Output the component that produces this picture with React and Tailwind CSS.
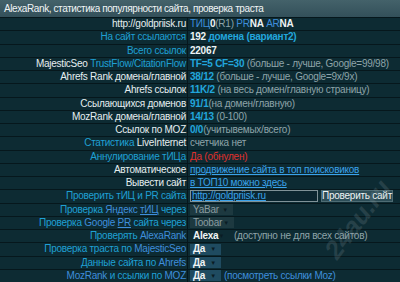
import React from "react";

const font = { fontFamily: '"Liberation Sans", Arial, sans-serif' };

function Row({ label, children }) {
    return (
        <div className="grid grid-cols-[187px_1fr] gap-x-px mb-px">
            <div className="bg-[#0d2b33] h-[12.25px] flex items-center justify-end pr-[1px] whitespace-nowrap overflow-hidden">
                {label}
            </div>
            <div className="bg-[#0d2b33] h-[12.25px] flex items-center pl-[2px] whitespace-nowrap overflow-hidden">
                {children}
            </div>
        </div>
    );
}

const W = ({ children }) => <span className="text-[#e6eef0]">{children}</span>;
const C = ({ children }) => <span className="text-[#1fa0d4]">{children}</span>;
const B = ({ children }) => <span className="text-[#3f8edb]">{children}</span>;
const G = ({ children }) => <span className="text-[#8ea4a9]">{children}</span>;
const N = ({ children }) => <span className="text-[#eef4f5] font-bold">{children}</span>;
const CB = ({ children }) => <span className="text-[#22a6dc] font-bold">{children}</span>;
const L = ({ children }) => <span className="text-[#3aa2ea] underline">{children}</span>;

function Sel({ text, w, bg, color, bold }) {
    return (
        <div
            className={`h-[11px] flex items-center justify-between pl-[3px] pr-[5px] ${w} ${bg} ${color} ${bold ? "font-bold" : ""}`}
        >
            <span>{text}</span>
            <span className="text-[6px] text-[#0a1c24]">▼</span>
        </div>
    );
}

export default function App() {
    return (
        <div
            className="relative w-[400px] h-[282px] bg-[#06171c] overflow-hidden text-[10px] leading-[12px] tracking-[-0.25px]"
            style={font}
        >
            <div className="h-[17px] bg-gradient-to-b from-[#44626a] to-[#33505a] text-[#f0f4f5] text-[10px] tracking-[-0.4px] flex items-center pl-[4px] mb-px">
                AlexaRank, статистика популярности сайта, проверка траста
            </div>

            <Row label={<W>http://goldpriisk.ru</W>}>
                <B>ТИЦ</B><N>0</N><G>(R1)</G>&nbsp;<B>PR</B><N>NA</N>&nbsp;<B>AR</B><N>NA</N>
            </Row>
            <Row label={<C>На сайт ссылаются</C>}>
                <N>192</N>&nbsp;<CB>домена (вариант2)</CB>
            </Row>
            <Row label={<C>Всего ссылок</C>}>
                <N>22067</N>
            </Row>
            <Row label={<><W>MajesticSeo</W>&nbsp;<C>TrustFlow/CitationFlow</C></>}>
                <CB>TF=5 CF=30</CB>&nbsp;<G>(больше - лучше, Google=99/98)</G>
            </Row>
            <Row label={<W>Ahrefs Rank домена/главной</W>}>
                <CB>38/12</CB>&nbsp;<G>(больше - лучше, Google=9x/9x)</G>
            </Row>
            <Row label={<W>Ahrefs ссылок</W>}>
                <CB>11K/2</CB>&nbsp;<G>(на весь домен/главную страницу)</G>
            </Row>
            <Row label={<W>Ссылающихся доменов</W>}>
                <CB>91/1</CB><G>(на домен/главную)</G>
            </Row>
            <Row label={<W>MozRank домена/главной</W>}>
                <CB>14/13</CB>&nbsp;<G>(0-100)</G>
            </Row>
            <Row label={<W>Ссылок по MOZ</W>}>
                <CB>0/0</CB><G>(учитывемых/всего)</G>
            </Row>
            <Row label={<><C>Статистика</C>&nbsp;<W>LiveInternet</W></>}>
                <G>счетчика нет</G>
            </Row>
            <Row label={<C>Аннулирование тИЦа</C>}>
                <span className="text-[#e0302c]">Да (обнулен)</span>
            </Row>
            <Row label={<W>Автоматическое</W>}>
                <L>продвижение сайта в топ поисковиков</L>
            </Row>
            <Row label={<W>Вывести сайт</W>}>
                <L>в ТОП10 можно здесь</L>
            </Row>
            <Row label={<C>Проверить тИЦ и PR сайта</C>}>
                <div className="w-[128px] h-[12px] border border-[#7f9298] bg-[#0b2630] flex items-center pl-[1px]">
                    <span className="text-[#3aa2ea] underline">http://goldpriisk.ru</span>
                </div>
                <div className="ml-[3px] w-[72px] h-[12px] bg-[#2d4e58] border border-[#4e6c74] text-[#eef4f5] flex items-center justify-center">
                    Проверить сайт
                </div>
            </Row>
            <Row label={<><C>Проверка</C>&nbsp;<B>Яндекс</B>&nbsp;<B><span className="underline">тИЦ</span></B>&nbsp;<C>через</C></>}>
                <Sel text="YaBar" w="w-[43px]" bg="bg-[#1d3940]" color="text-[#8a9ca0]" />
            </Row>
            <Row label={<><C>Проверка</C>&nbsp;<B>Google</B>&nbsp;<B><span className="underline">PR</span></B>&nbsp;<C>сайта через</C></>}>
                <Sel text="Toobar" w="w-[44px]" bg="bg-[#1d3940]" color="text-[#8a9ca0]" />
            </Row>
            <Row label={<><C>Проверять</C>&nbsp;<B>AlexaRank</B></>}>
                <Sel text="Alexa" w="w-[36px]" bg="bg-[#0d2b33]" color="text-[#f0f4f5]" bold />
                <span className="ml-[8px]"><G>(доступно не для всех сайтов)</G></span>
            </Row>
            <Row label={<><C>Проверка траста по</C>&nbsp;<B>MajesticSeo</B></>}>
                <Sel text="Да" w="w-[31px]" bg="bg-[#1f4b60]" color="text-[#f0f4f5]" bold />
            </Row>
            <Row label={<><C>Данные сайта по</C>&nbsp;<B>Ahrefs</B></>}>
                <Sel text="Да" w="w-[31px]" bg="bg-[#1f4b60]" color="text-[#f0f4f5]" bold />
            </Row>
            <Row label={<><B>MozRank</B>&nbsp;<C>и ссылки по</C>&nbsp;<B>MOZ</B></>}>
                <Sel text="Да" w="w-[31px]" bg="bg-[#1f4b60]" color="text-[#f0f4f5]" bold />
                <span className="ml-[3px] text-[#3f8edb]">(посмотреть ссылки Moz)</span>
            </Row>

            <div
                className="absolute left-[312px] top-[213px] text-[26px] italic font-bold text-[#8a9aa0] opacity-20 -rotate-[53deg] whitespace-nowrap pointer-events-none"
            >
                24au.ru
            </div>
        </div>
    );
}
